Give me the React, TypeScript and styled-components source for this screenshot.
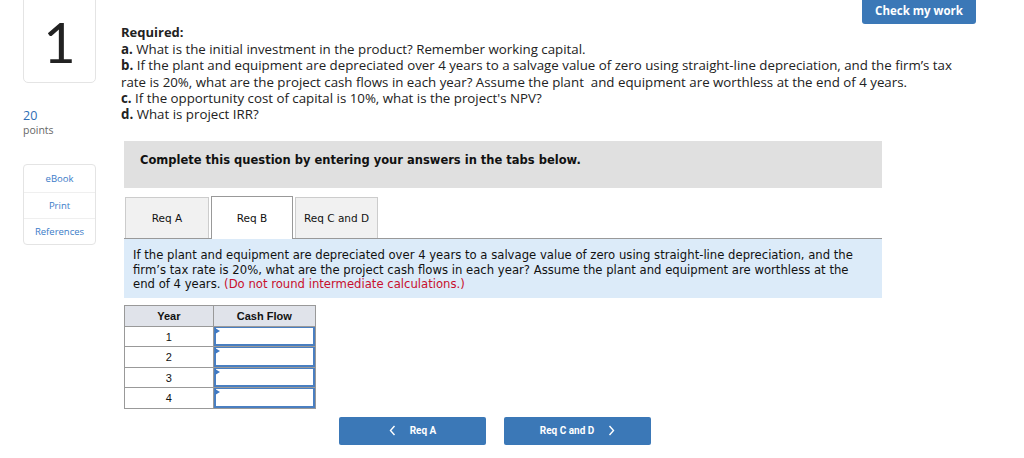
import React from 'react';
import styled, { createGlobalStyle } from 'styled-components';

const GlobalStyle = createGlobalStyle`
  html, body {
    margin: 0;
    padding: 0;
    background: #fff;
  }
  body {
    font-family: "Open Sans", Lato, sans-serif;
    color: #222;
    overflow: hidden;
  }
`;

const Page = styled.div`
  display: flex;
  align-items: flex-start;
  gap: 25px;
  width: 1024px;
  height: 458px;
  padding-left: 23px;
  box-sizing: border-box;
`;

const Sidebar = styled.div`
  display: flex;
  flex-direction: column;
  width: 73px;
  flex-shrink: 0;
`;

const NumberBox = styled.div`
  height: 88px;
  margin-top: -5px;
  border: 1px solid #e4e4e4;
  border-radius: 5px;
  box-sizing: border-box;
  display: flex;
  align-items: center;
  justify-content: center;
  font-family: Lato, sans-serif;
  font-size: 56px;
  color: #222;
  padding-top: 5px;
`;

const Points = styled.div`
  margin-top: 25px;
  font-size: 12.5px;
  line-height: 16px;
  color: #2e6db4;
`;

const PointsLabel = styled.div`
  font-size: 10.5px;
  line-height: 12px;
  color: #666;
`;

const LinksBox = styled.div`
  margin-top: 28px;
  border: 1px solid #e4e4e4;
  border-radius: 4px;
  display: flex;
  flex-direction: column;
`;

const SideLink = styled.a<{ $h: number }>`
  height: ${p => p.$h}px;
  display: flex;
  align-items: center;
  justify-content: center;
  font-size: 9.5px;
  color: #3a7bc8;
  & + & {
    border-top: 1px solid #efefef;
  }
`;

const Main = styled.div`
  flex: 1;
  display: flex;
  flex-direction: column;
  padding-right: 48px;
`;

const CheckButton = styled.button`
  align-self: flex-end;
  width: 114px;
  height: 24px;
  border: none;
  border-radius: 0 0 3px 3px;
  background: #3b78b7;
  color: #fff;
  font-family: "Open Sans", sans-serif;
  font-weight: 700;
  font-size: 11.5px;
  padding: 0 0 3px;
`;

const Heading = styled.div`
  margin-top: 0;
  font-size: 13px;
  line-height: 16px;
  font-weight: 700;
`;

const Question = styled.div`
  margin-top: 1px;
  font-size: 13.3px;
  line-height: 16.3px;
  color: #222;
  b {
    font-weight: 700;
  }
`;

const Content = styled.div`
  width: 758px;
  margin-left: 3px;
  display: flex;
  flex-direction: column;
`;

const Instruction = styled.div`
  margin-top: 19px;
  height: 47px;
  box-sizing: border-box;
  background: #e0e0e0;
  padding: 12px 0 0 16px;
  font-family: "DejaVu Sans", Verdana, sans-serif;
  font-weight: 700;
  font-size: 11.5px;
  line-height: 14px;
  color: #111;
`;

const Tabs = styled.div`
  margin-top: 7px;
  display: flex;
  align-items: flex-end;
  gap: 2px;
  padding-left: 1px;
  border-bottom: 1px solid #999;
  height: 43px;
`;

const Tab = styled.div<{ $active?: boolean; $w: number }>`
  width: ${p => p.$w}px;
  height: ${p => (p.$active ? 43 : 41)}px;
  box-sizing: border-box;
  display: flex;
  align-items: center;
  justify-content: center;
  font-family: "DejaVu Sans", Verdana, sans-serif;
  font-size: 10.5px;
  color: #111;
  background: ${p => (p.$active ? '#fff' : '#f1f1f1')};
  border: 1px solid ${p => (p.$active ? '#999' : '#ccc')};
  border-bottom: none;
  margin-bottom: ${p => (p.$active ? -1 : 0)}px;
`;

const Panel = styled.div`
  background: #dcebf9;
  padding: 9px 9px 6px;
  font-family: "DejaVu Sans", Verdana, sans-serif;
  font-size: 11.65px;
  line-height: 14.5px;
  color: #111;
`;

const Warn = styled.span`
  color: #c8102e;
`;

const Table = styled.table`
  margin-top: 7px;
  border-collapse: collapse;
  width: 192px;
  font-family: "Liberation Sans", Arial, sans-serif;
  font-size: 11px;
  color: #111;
`;

const Th = styled.th<{ $w: number }>`
  width: ${p => p.$w}px;
  height: 20px;
  background: #e0e3ea;
  border: 1px solid #999;
  font-weight: 700;
  padding: 0;
`;

const Td = styled.td`
  height: 19.5px;
  border: 1px solid #999;
  text-align: center;
  padding: 0;
`;

const InputCell = styled.td`
  height: 19.5px;
  border: 1px solid #999;
  padding: 0;
  position: relative;
`;

const Input = styled.div`
  position: absolute;
  inset: 0;
  border: 2px solid #4a7fc1;
  border-top-width: 1px;
  background: #fff;
  &::before {
    content: '';
    position: absolute;
    left: -1px;
    top: 0;
    border-top: 3px solid transparent;
    border-bottom: 3px solid transparent;
    border-left: 5px solid #3e78c2;
  }
`;

const NavRow = styled.div`
  margin-top: 8px;
  display: flex;
  gap: 18px;
  padding-left: 215px;
`;

const NavButton = styled.button`
  width: 147px;
  height: 28px;
  border: none;
  border-radius: 2px;
  background: #3b78b7;
  color: #fff;
  font-family: Roboto, "Liberation Sans", sans-serif;
  font-weight: 700;
  font-size: 10px;
  display: flex;
  align-items: center;
  justify-content: center;
  gap: 14px;
  padding: 0;
`;

const Chevron = ({ dir }: { dir: 'left' | 'right' }) => (
  <svg width="7" height="11" viewBox="0 0 7 11">
    <path
      d={dir === 'left' ? 'M5.5 1 L1.5 5.5 L5.5 10' : 'M1.5 1 L5.5 5.5 L1.5 10'}
      fill="none"
      stroke="#fff"
      strokeWidth="1.4"
    />
  </svg>
);

export default function App() {
  const years = [1, 2, 3, 4];
  return (
    <>
      <GlobalStyle />
      <Page>
        <Sidebar>
          <NumberBox>1</NumberBox>
          <Points>20</Points>
          <PointsLabel>points</PointsLabel>
          <LinksBox>
            <SideLink $h={27}>eBook</SideLink>
            <SideLink $h={25}>Print</SideLink>
            <SideLink $h={25}>References</SideLink>
          </LinksBox>
        </Sidebar>
        <Main>
          <CheckButton>Check my work</CheckButton>
          <Heading>Required:</Heading>
          <Question>
            <b>a.</b> What is the initial investment in the product? Remember working capital.
            <br />
            <b>b.</b> If the plant and equipment are depreciated over 4 years to a salvage value of zero using
            straight-line depreciation, and the firm’s tax
            <br />
            rate is 20%, what are the project cash flows in each year? Assume the plant&nbsp; and equipment are
            worthless at the end of 4 years.
            <br />
            <b>c.</b> If the opportunity cost of capital is 10%, what is the project's NPV?
            <br />
            <b>d.</b> What is project IRR?
          </Question>
          <Content>
            <Instruction>Complete this question by entering your answers in the tabs below.</Instruction>
            <Tabs>
              <Tab $w={84}>Req A</Tab>
              <Tab $w={82} $active>
                Req B
              </Tab>
              <Tab $w={83}>Req C and D</Tab>
            </Tabs>
            <Panel>
              If the plant and equipment are depreciated over 4 years to a salvage value of zero using straight-line
              depreciation, and the
              <br />
              firm’s tax rate is 20%, what are the project cash flows in each year? Assume the plant and equipment are
              worthless at the
              <br />
              end of 4 years. <Warn>(Do not round intermediate calculations.)</Warn>
            </Panel>
            <Table>
              <thead>
                <tr>
                  <Th $w={89}>Year</Th>
                  <Th $w={103}>Cash Flow</Th>
                </tr>
              </thead>
              <tbody>
                {years.map(y => (
                  <tr key={y}>
                    <Td>{y}</Td>
                    <InputCell>
                      <Input />
                    </InputCell>
                  </tr>
                ))}
              </tbody>
            </Table>
            <NavRow>
              <NavButton>
                <Chevron dir="left" />
                Req A
              </NavButton>
              <NavButton>
                Req C and D
                <Chevron dir="right" />
              </NavButton>
            </NavRow>
          </Content>
        </Main>
      </Page>
    </>
  );
}
